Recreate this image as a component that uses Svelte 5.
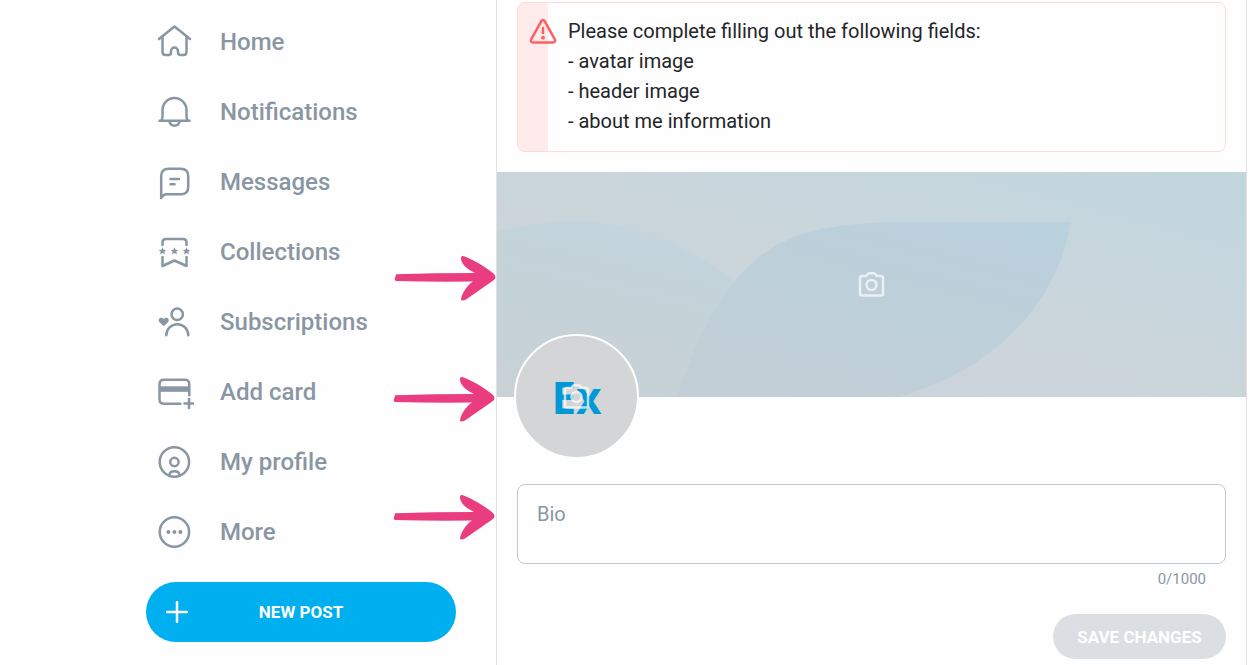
<script lang="ts">
	type NavItem = {
		label: string;
		icon: string;
	};

	const nav: NavItem[] = [
		{ label: "Home", icon: "home" },
		{ label: "Notifications", icon: "bell" },
		{ label: "Messages", icon: "message" },
		{ label: "Collections", icon: "bookmark" },
		{ label: "Subscriptions", icon: "user" },
		{ label: "Add card", icon: "card" },
		{ label: "My profile", icon: "profile" },
		{ label: "More", icon: "more" },
	];

	const missing = ["avatar image", "header image", "about me information"];
	const max_length = 1000;

	let bio = $state("");
	const can_save = $derived(bio.length > 0);
</script>

{#snippet star(x: number)}
	<path
		class="solid"
		transform="translate({x} 19)"
		d="M0-3.8 1.1-1.3 3.8-1.1 1.8.7 2.4 3.4 0 2-2.4 3.4-1.8.7-3.8-1.1-1.1-1.3z"
	/>
{/snippet}

{#snippet camera()}
	<svg class="camera" viewBox="0 0 28 28" aria-hidden="true">
		<path
			d="M4 5h3.300q1 0 1.600-.8l.7-.9q.8-1 2-1h3.800q1.200 0 2 1l.7.9q.6.8 1.600.8h3.300q2 0 2 2v15.500q0 2-2 2h-19q-2 0-2-2V7q0-2 2-2z"
		/>
		<circle cx="13.500" cy="14" r="5" />
	</svg>
{/snippet}

{#snippet arrow()}
	<svg class="arrow" viewBox="0 0 102 46" aria-hidden="true">
		<path
			d="M2.200 19.200 Q40 18 81 18 C73 14 66.500 8.500 67 2.500 Q67.500 .5 70 1.300 C82 6 91 12 99 18 Q103.500 22 100 25 L72 44.500 Q69 46 67 45 C67 40 73 30 79 26.500 Q40 27 2 26 Q0 25 1 23z"
		/>
	</svg>
{/snippet}

<div class="page">
	<aside class="sidebar">
		<nav>
			{#each nav as item (item.icon)}
				<a class="nav-link" href="#{item.icon}">
					<svg class="nav-icon" viewBox="0 0 40 40" aria-hidden="true">
						{#if item.icon === "home"}
							<path d="M5 17 20.500 4.500 36 17" />
							<path
								d="M8.500 14.500V30q0 3 3 3h3q2.500 0 2.500-2.500V29a3.500 3.500 0 0 1 7 0v1.500q0 2.500 2.500 2.500h3q3 0 3-3V14.500"
							/>
						{:else if item.icon === "bell"}
							<path d="M5.500 28.700h30" />
							<path
								d="M7.500 28.500q1-1.500 1-4.500v-6a12 12 0 0 1 24 0v6q0 3 1 4.500M15.500 29.500c1 5.500 9 5.500 10 0"
							/>
						{:else if item.icon === "message"}
							<path
								d="M7.200 36V14q0-7.300 7.500-7.300h12q7.500 0 7.500 7.300v11q0 7.300-7.500 7.300h-14q-3.500 0-5.500 3.700"
							/>
							<path d="M16.500 17h8.500M16.500 22.300h4" />
						{:else if item.icon === "bookmark"}
							<path d="M8.500 13v-2.500q0-3.500 3.500-3.500h17q3.500 0 3.500 3.500V13" />
							<path d="M8.500 25v9l12-5.500 12 5.500v-9" />
							{@render star(8.5)}
							{@render star(20.5)}
							{@render star(32.5)}
						{:else if item.icon === "user"}
							<circle cx="23.200" cy="12.300" r="5.700" />
							<path d="M12.300 33.200a11 11 0 0 1 22 0" />
							<path
								class="solid"
								d="M9.700 24.300 5.500 20.200C3 17 6.800 13.800 9.700 17c2.900-3.200 6.700 0 4.200 3.200z"
							/>
						{:else if item.icon === "card"}
							<path
								d="M26.300 31.800H10q-4.500 0-4.500-4.500V12.200q0-4.500 4.500-4.500h20.800q4.500 0 4.500 4.500v11"
							/>
							<path class="solid" d="M5 14.300h30.500v5.500H5z" />
							<path d="M35 27v9M30.500 31.500h9" />
						{:else if item.icon === "profile"}
							<circle cx="20.400" cy="20" r="14.700" />
							<circle cx="20.400" cy="20" r="4.200" />
							<path d="M15.500 32.500c.5-4.500 9.300-4.500 9.800 0" />
						{:else}
							<circle cx="20.400" cy="20" r="14.700" />
							<circle class="solid" cx="14.400" cy="20" r="2" />
							<circle class="solid" cx="20.400" cy="20" r="2" />
							<circle class="solid" cx="26.400" cy="20" r="2" />
						{/if}
					</svg>
					<span>{item.label}</span>
				</a>
			{/each}
		</nav>

		<button class="new-post" type="button">
			<svg class="plus" viewBox="0 0 22 22" aria-hidden="true">
				<path d="M11 1v20M1 11h20" />
			</svg>
			<span>NEW POST</span>
		</button>
	</aside>

	<main class="content">
		<div class="alert" role="alert">
			<div class="alert-strip">
				<svg class="warning" viewBox="0 0 28 28" aria-hidden="true">
					<path
						d="M12.200 3.300q1.800-2.600 3.600 0l10 18q1.300 3-2 3.200H4.200q-3.300-.2-2-3.200z"
					/>
					<path d="M14 10v5" />
					<circle class="dot" cx="14" cy="19.700" r="1.900" />
				</svg>
			</div>
			<div class="alert-text">
				Please complete filling out the following fields:
				{#each missing as field}
					<div>- {field}</div>
				{/each}
			</div>
		</div>

		<div class="target">
			<button class="cover" type="button" aria-label="Change header image">
				<svg
					class="cover-art"
					viewBox="0 0 749 225"
					preserveAspectRatio="xMidYMid slice"
					aria-hidden="true"
				>
					<defs>
						<linearGradient id="sky" gradientUnits="userSpaceOnUse" x1="340" y1="310" x2="440" y2="-60">
							<stop offset="0" stop-color="#cdd5d4" />
							<stop offset="0.300" stop-color="#ccd4db" />
							<stop offset="0.500" stop-color="#cad5da" />
							<stop offset="0.700" stop-color="#c8d6dd" />
							<stop offset="1" stop-color="#c2d6de" />
						</linearGradient>
						<linearGradient id="leaf-left" gradientUnits="userSpaceOnUse" x1="60" y1="225" x2="100" y2="50">
							<stop offset="0" stop-color="#c8d2d7" />
							<stop offset="0.500" stop-color="#c5d2d8" />
							<stop offset="1" stop-color="#c3d4dc" />
						</linearGradient>
						<linearGradient id="leaf-right" gradientUnits="userSpaceOnUse" x1="330" y1="250" x2="390" y2="20">
							<stop offset="0" stop-color="#c2ced6" />
							<stop offset="0.400" stop-color="#bfd0d8" />
							<stop offset="0.750" stop-color="#bccfda" />
							<stop offset="1" stop-color="#bad2de" />
						</linearGradient>
					</defs>
					<rect width="749" height="225" fill="url(#sky)" />
					<path
						d="M0 60C75 40 155 45 238 109L180 225H0z"
						fill="url(#leaf-left)"
					/>
					<path
						d="M180 225C194 180 213 140 238 109C277 61 325 50 415 50H574C561 128 502 195 403 225z"
						fill="url(#leaf-right)"
					/>
				</svg>
				{@render camera()}
			</button>
			{@render arrow()}
		</div>

		<div class="target avatar-row">
			<button class="avatar" type="button" aria-label="Change avatar image">
				<span class="initials">Ex</span>
				{@render camera()}
			</button>
			{@render arrow()}
		</div>

		<div class="target bio">
			<textarea
				placeholder="Bio"
				aria-label="Bio"
				maxlength={max_length}
				bind:value={bio}
			></textarea>
			{@render arrow()}
		</div>
		<div class="counter">{bio.length}/{max_length}</div>

		<div class="actions">
			<button class="save" type="button" disabled={!can_save}>SAVE CHANGES</button>
		</div>
	</main>
</div>

<style>
	:global(body) {
		background: #fefefe;
		color: #242529;
		font-family: Roboto, "Liberation Sans", sans-serif;
	}

	button {
		border: none;
		padding: 0;
		font-family: inherit;
		cursor: pointer;
	}

	svg {
		display: block;
		fill: none;
		stroke: currentColor;
		stroke-width: 2.5;
		stroke-linecap: round;
		stroke-linejoin: round;
	}

	.page {
		display: flex;
		min-height: 100vh;
		padding-right: 9px;
		box-sizing: border-box;
		overflow: hidden;
	}

	.sidebar {
		flex: none;
		width: 310px;
		padding: 7px 40px 0 146px;
	}

	.nav-link {
		display: flex;
		align-items: center;
		gap: 26px;
		height: 70px;
		padding-left: 8px;
		color: #8a96a3;
		font-size: 24px;
		font-weight: 500;
		text-decoration: none;
	}

	.nav-icon {
		width: 40px;
		height: 40px;
	}

	.solid {
		fill: currentColor;
		stroke: none;
	}

	.new-post {
		display: grid;
		grid-template-columns: 1fr auto 1fr;
		align-items: center;
		width: 100%;
		height: 60px;
		margin-top: 15px;
		padding: 0 20px;
		border-radius: 30px;
		background: #00aff0;
		color: #fefefe;
		font-size: 17px;
		font-weight: 700;
	}

	.plus {
		width: 22px;
		height: 22px;
	}

	.content {
		flex: 1;
		min-width: 0;
		padding-top: 2px;
		border: 1px solid #e0e2e4;
		border-width: 0 1px;
	}

	.alert {
		display: flex;
		gap: 20px;
		margin: 0 20px 20px;
		border: 1px solid #ffd8d8;
		border-radius: 8px;
		overflow: hidden;
	}

	.alert-strip {
		flex: none;
		width: 30px;
		padding: 15px 0 0 11px;
		box-sizing: border-box;
		background: #ffebeb;
		color: #ff5f5f;
	}

	.warning {
		width: 28px;
		height: 28px;
	}

	.dot {
		fill: currentColor;
		stroke: none;
	}

	.alert-text {
		padding: 13px 0 15px;
		font-size: 20px;
		line-height: 30px;
	}

	.target {
		position: relative;
	}

	.arrow {
		position: absolute;
		top: 83px;
		right: calc(100% + 1px);
		width: 102px;
		height: 46px;
		fill: #ea3d80;
		stroke: none;
	}

	.cover {
		display: grid;
		place-items: center;
		position: relative;
		width: 100%;
		height: 225px;
		background: #c8d6dd;
	}

	.cover-art {
		position: absolute;
		inset: 0;
		width: 100%;
		height: 100%;
		stroke: none;
	}

	.camera {
		position: relative;
		width: 28px;
		height: 28px;
		color: #fefefe;
		opacity: 0.7;
	}

	.avatar-row {
		margin-top: -63px;
		padding-left: 17px;
	}

	.avatar-row .arrow {
		top: 42px;
		right: calc(100% + 2px);
	}

	.avatar {
		display: grid;
		place-items: center;
		width: 125px;
		height: 125px;
		border: 2px solid #fefefe;
		border-radius: 50%;
		background: #d4d5d6;
	}

	.avatar > :global(*) {
		grid-area: 1 / 1;
	}

	.initials {
		color: #0099d6;
		font-family: "Open Sans", sans-serif;
		font-size: 44px;
		font-weight: 700;
	}

	.bio {
		margin: 25px 20px 0;
	}

	.bio .arrow {
		top: 10px;
		right: calc(100% + 22px);
	}

	textarea {
		display: block;
		width: 100%;
		height: 80px;
		padding: 14px 19px;
		box-sizing: border-box;
		border: 1px solid #c5c9d3;
		border-radius: 8px;
		background: none;
		color: inherit;
		font-family: inherit;
		font-size: 20px;
		line-height: 30px;
		resize: none;
	}

	textarea::placeholder {
		color: #8a96a3;
	}

	.counter {
		padding: 5px 40px 0 0;
		color: #8a96a3;
		font-size: 15px;
		line-height: 20px;
		text-align: right;
	}

	.actions {
		display: flex;
		justify-content: flex-end;
		padding: 25px 20px 6px;
	}

	.save {
		min-width: 173px;
		height: 45px;
		padding: 0 20px;
		border-radius: 23px;
		background: #00aff0;
		color: #fefefe;
		font-size: 17px;
		font-weight: 700;
	}

	.save:disabled {
		background: #dbdfe4;
		cursor: default;
	}
</style>
